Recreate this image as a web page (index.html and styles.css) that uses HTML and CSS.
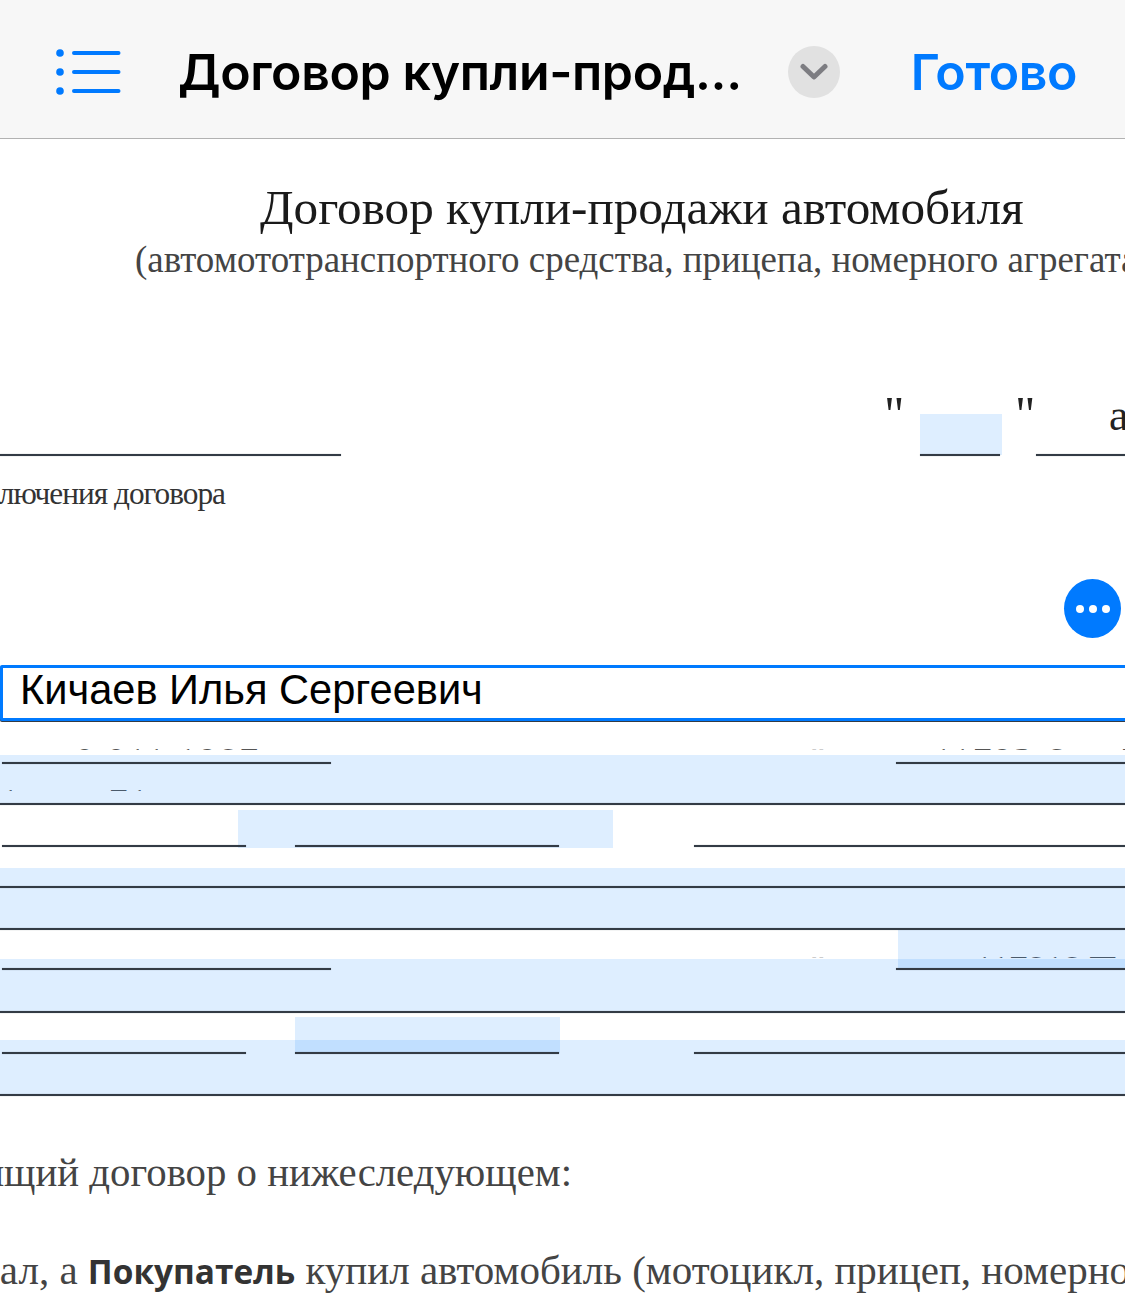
FILE: index.html
```html
<!DOCTYPE html>
<html lang="ru">
<head>
<meta charset="utf-8">
<title>Договор купли-продажи</title>
<link rel="stylesheet" href="styles.css">
</head>
<body>
<header class="toolbar">
  <svg class="list-icon" width="66" height="46" viewBox="0 0 66 46" aria-hidden="true">
    <circle cx="4" cy="4" r="3.8"/><circle cx="4" cy="23" r="3.8"/><circle cx="4" cy="42" r="3.8"/>
    <path d="M18 4H62.5M18 23H62.5M18 42H62.5"/>
  </svg>
  <h1 class="doc-title">Договор купли-прод...</h1>
  <button class="chevron-btn" aria-label="Развернуть">
    <svg width="28" height="18" viewBox="0 0 28 18" aria-hidden="true"><path d="M3 3.5L14 14L25 3.5"/></svg>
  </button>
  <a class="done">Готово</a>
</header>
<main class="doc">
  <div class="title">Договор купли-продажи автомобиля</div>
  <div class="subtitle">(автомототранспортного средства, прицепа, номерного агрегата)</div>
  <div class="quote q1">"</div>
  <div class="quote q2">"</div>
  <div class="year-letter">а</div>
  <div class="place-note">заключения договора</div>

  <div class="stub s1"><span>0.011.1987</span></div>
  <div class="stub s2"><span>11793.6     7</span></div>
  <div class="stub s3"><span>1        71</span></div>
  <div class="stub s4"><span>117818 П</span></div>
  <div class="stub s5"><span>"</span></div>
  <div class="stub s6"><span>"</span></div>

  <div class="band b1"></div><div class="band b2"></div><div class="band b3"></div><div class="band b4"></div>
  <div class="band b5"></div><div class="band b6"></div><div class="band b7"></div><div class="band b8"></div>

  <div class="rule r1"></div><div class="rule r2"></div><div class="rule r3"></div>
  <div class="rule r4"></div><div class="rule r5"></div><div class="rule r6"></div>
  <div class="rule r7"></div><div class="rule r8"></div><div class="rule r9"></div>
  <div class="rule r10"></div><div class="rule r11"></div><div class="rule r12"></div>
  <div class="rule r13"></div><div class="rule r14"></div><div class="rule r15"></div>
  <div class="rule r16"></div><div class="rule r17"></div><div class="rule r18"></div>

  <div class="name-field">Кичаев Илья Сергеевич</div>
  <button class="more-btn" aria-label="Ещё"><i></i><i></i><i></i></button>

  <div class="body-line l1">настоящий договор о нижеследующем:</div>
  <div class="body-line l2">дал, а <b>Покупатель</b> купил автомобиль (мотоцикл, прицеп, номерной</div>
</main>
</body>
</html>
```
FILE: styles.css
```css
* { box-sizing: border-box; }
html, body { margin: 0; height: 100%; }
body { width: 1125px; height: 1298px; overflow: hidden; background: #fff; display: flex; flex-direction: column; }

.toolbar {
  height: 139px; flex: none; display: flex; align-items: center;
  background: #f7f7f7; border-bottom: 1px solid #b2b2b2;
  padding: 6px 48px 0 56px;
  font-family: Inter, "Noto Sans", sans-serif;
}
.list-icon circle { fill: #007aff; }
.list-icon path { stroke: #007aff; stroke-width: 4; stroke-linecap: round; fill: none; }
.doc-title { margin: 0 0 0 56px; font-size: 50px; font-weight: 600; color: #000; white-space: nowrap; width: 610px; letter-spacing: -0.4px; }
.chevron-btn {
  width: 52px; height: 52px; border: 0; padding: 0; border-radius: 50%;
  background: #e1e1e1; display: flex; align-items: center; justify-content: center;
}
.chevron-btn path { stroke: #7d7d82; stroke-width: 5; stroke-linecap: round; stroke-linejoin: round; fill: none; }
.done { margin-left: auto; font-size: 50px; font-weight: 600; color: #007aff; letter-spacing: -0.4px; }

.doc { position: relative; flex: 1; overflow: hidden; font-family: "Liberation Serif", serif; color: #111; }
.doc > div, .doc > button { position: absolute; }

.title { left: 260px; top: 42px; font-size: 49.2px; line-height: 54px; white-space: nowrap; color: #1a1a1a; }
.subtitle { left: 135px; top: 101px; font-size: 36.95px; line-height: 40px; white-space: nowrap; color: #444; }
.quote { top: 250px; font-size: 50px; line-height: 50px; color: #222; }
.q1 { left: 884px; }
.q2 { left: 1015px; }
.year-letter { left: 1109px; top: 253px; font-size: 44px; line-height: 48px; color: #222; }
.place-note { right: 900px; top: 338px; font-size: 31.3px; line-height: 34px; white-space: nowrap; letter-spacing: -1px; color: #333; }

.stub { height: 3px; overflow: hidden; font-size: 38px; line-height: 38px; white-space: pre; color: #555; }
.stub span { display: block; margin-top: -5px; letter-spacing: 1.5px; }
.s1 { left: 75px; top: 608px; }
.s2 { left: 933px; top: 608px; }
.s3 { left: 0; top: 649px; }
.s4 { left: 974px; top: 816px; }
.s4 span { letter-spacing: -1px; }
.s5 { left: 810px; top: 608px; color: #ccc; }
.s6 { left: 810px; top: 816px; color: #ccc; }

.band { background: rgba(0, 122, 255, 0.13); }
.b1 { left: 920px; top: 275px; width: 82px; height: 41px; }
.b2 { left: 0; top: 616px; width: 1125px; height: 49px; }
.b3 { left: 238px; top: 671px; width: 375px; height: 38px; }
.b4 { left: 0; top: 729px; width: 1125px; height: 62px; }
.b5 { left: 898px; top: 791px; width: 227px; height: 40px; }
.b6 { left: 0; top: 820px; width: 1125px; height: 53px; }
.b7 { left: 295px; top: 878px; width: 265px; height: 36px; }
.b8 { left: 0; top: 901px; width: 1125px; height: 55px; }

.rule { height: 2px; background: #333b45; box-shadow: 0 0 1px rgba(51, 59, 69, 0.55); }
.r1 { left: 0; top: 315px; width: 341px; }
.r2 { left: 920px; top: 315px; width: 80px; }
.r3 { left: 1036px; top: 315px; width: 89px; }
.r4 { left: 2px; top: 623px; width: 329px; }
.r5 { left: 896px; top: 623px; width: 229px; }
.r6 { left: 0; top: 664px; width: 1125px; }
.r7 { left: 2px; top: 706px; width: 244px; }
.r8 { left: 295px; top: 706px; width: 264px; }
.r9 { left: 694px; top: 706px; width: 431px; }
.r10 { left: 0; top: 747px; width: 1125px; }
.r11 { left: 0; top: 789px; width: 1125px; }
.r12 { left: 2px; top: 829px; width: 329px; }
.r13 { left: 896px; top: 829px; width: 229px; }
.r14 { left: 0; top: 872px; width: 1125px; }
.r15 { left: 2px; top: 913px; width: 244px; }
.r16 { left: 295px; top: 913px; width: 264px; }
.r17 { left: 694px; top: 913px; width: 431px; }
.r18 { left: 0; top: 955px; width: 1125px; }

.name-field {
  left: 0; top: 526px; width: 1140px; height: 56px;
  background: #fff; border: 3px solid #007aff; border-radius: 2px;
  box-shadow: 0 1px 0 #333b45;
  padding-left: 17px;
  font-family: "Liberation Sans", sans-serif; font-size: 41.6px; line-height: 44px; color: #000;
}
.more-btn {
  left: 1064px; top: 440px; width: 57px; height: 59px; border: 0; padding: 0; border-radius: 50%;
  background: #007aff; display: flex; align-items: center; justify-content: center; gap: 5px;
}
.more-btn i { width: 8px; height: 8px; border-radius: 50%; background: #fff; }

.body-line { white-space: nowrap; font-size: 40.8px; line-height: 44px; color: #444; }
.l1 { right: 553px; top: 1012px; }
.l2 { left: -21px; top: 1109px; font-size: 41px; }
.l2 b { font-family: "Open Sans", sans-serif; font-weight: 700; font-size: 33.4px; color: #333; }
```
